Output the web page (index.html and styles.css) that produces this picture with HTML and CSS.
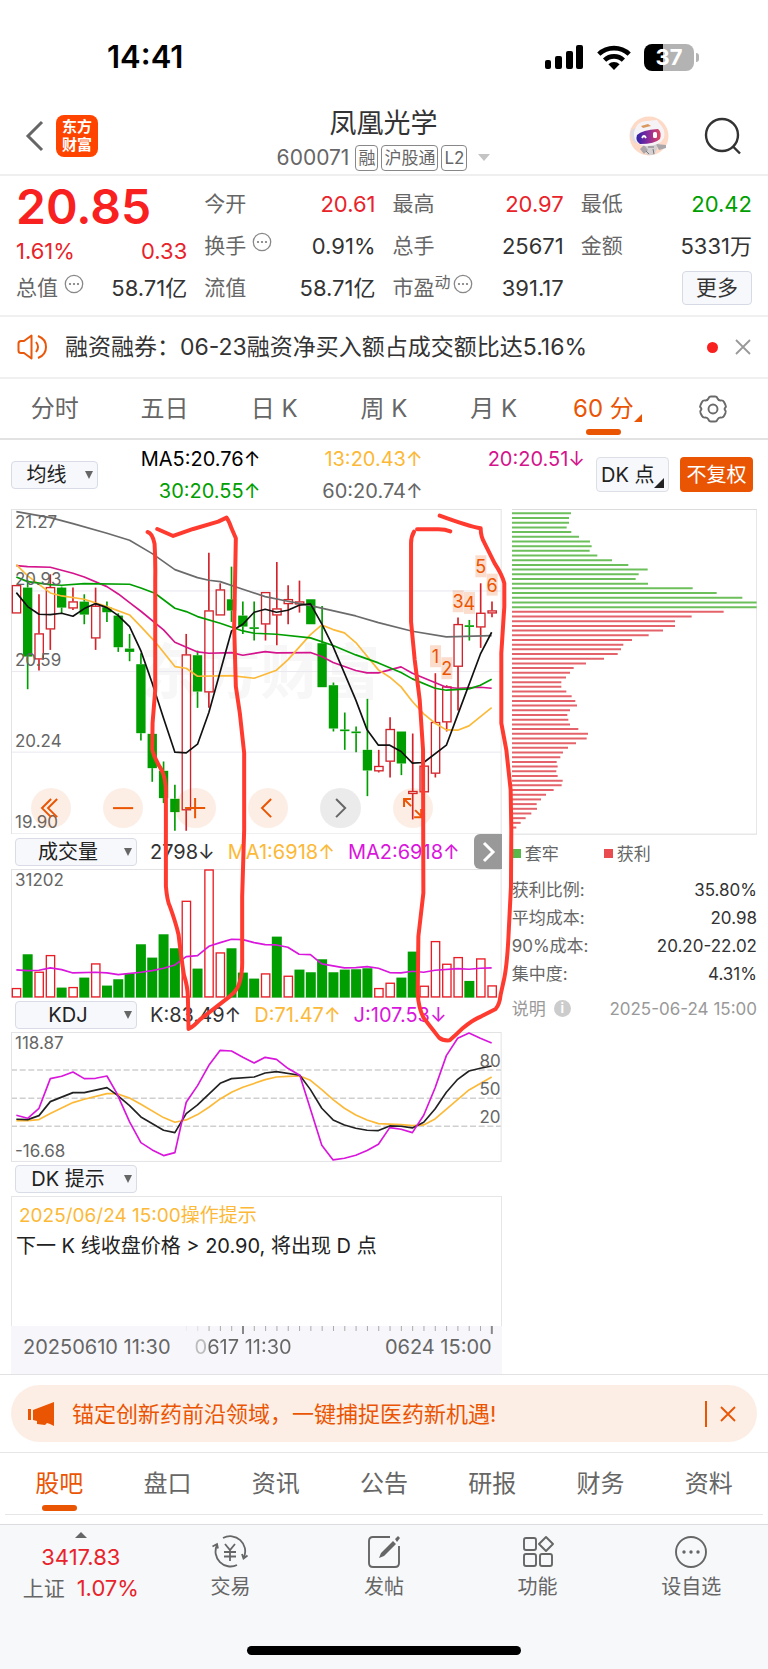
FILE: index.html
```
<!DOCTYPE html>
<html lang="zh-CN">
<head>
<meta charset="utf-8">
<meta name="viewport" content="width=device-width, initial-scale=1">
<title>凤凰光学 600071</title>
<link rel="stylesheet" href="styles.css">
</head>
<body>
<div class="status">
  <span class="clock">14:41</span>
  <div class="status-icons">
    <svg width="39" height="25" viewBox="0 0 39 25"><rect x="0" y="15" width="6" height="9" rx="2"/><rect x="10" y="11" width="7" height="13" rx="2"/><rect x="21" y="6" width="7" height="18" rx="2"/><rect x="31" y="0" width="7" height="24" rx="2"/></svg>
    <svg width="34" height="25" viewBox="0 0 34 25"><g fill="none" stroke="#000" stroke-width="4.6"><path d="M1.8 9.200A22 22 0 0 1 32.200 9.200"/><path d="M7.600 15.200A13.500 13.500 0 0 1 26.400 15.200"/></g><path d="M17 25l-5.600-5.800a8 8 0 0 1 11.200 0z"/></svg>
    <div class="battery"><span class="battery-body">37</span><i class="battery-cap"></i></div>
  </div>
</div>

<header class="header">
  <div class="header-left">
    <button class="icon-btn" aria-label="返回"><svg width="20" height="32" viewBox="0 0 20 32"><path d="M17 2L3 16l14 14" fill="none" stroke="#666" stroke-width="3"/></svg></button>
    <div class="logo"><span>东方</span><span>财富</span></div>
  </div>
  <div class="header-title">
    <h1>凤凰光学</h1>
    <div class="code-row"><span class="code">600071</span><span class="tag">融</span><span class="tag">沪股通</span><span class="tag">L2</span><i class="caret-light"></i></div>
  </div>
  <div class="header-right">
    <button class="icon-btn" aria-label="智能助手">
      <svg width="40" height="40" viewBox="0 0 40 40">
        <defs><linearGradient id="visor" x1="0" x2="1"><stop offset="0" stop-color="#2b22a8"/><stop offset=".5" stop-color="#8a2c9c"/><stop offset="1" stop-color="#e0455c"/></linearGradient></defs>
        <circle cx="20" cy="20" r="19.500" fill="#fdd9c6"/>
        <path d="M13 27h17l-2 6-3 6h-7l-3-6z" fill="#d5d1d3"/><path d="M27 28l10 1v3l-7 2zM15 29l-4 4 4 5 4-4z" fill="#aaa6aa"/>
        <path d="M19 31h6M17 35l3 3m4-5l1 5" stroke="#777" fill="none"/>
        <path d="M2 14l5-2 6 14-7 1q-6-5-4-13z" fill="#dedbe2"/>
        <path d="M5 16Q8 4 19 5q7-1 9-1l2 3q7 6 5 15-4 8-18 8Q4 29 5 16z" fill="#f6f3f6"/>
        <path d="M12 10l7-2 3 2-8 2z" fill="#d9985c"/>
        <path d="M8 19q5-5 21-6 4 3 2 10-5 5-20 5-5-3-3-9z" fill="url(#visor)"/>
        <path d="M13 22q2-4 4 0" fill="none" stroke="#fff" stroke-width="1.800"/><rect x="24" y="16" width="4" height="6" rx="1.500" fill="#fff"/>
      </svg>
    </button>
    <button class="icon-btn" aria-label="搜索"><svg width="38" height="38" viewBox="0 0 38 38"><g fill="none" stroke="#333" stroke-width="2.400"><circle cx="18" cy="18" r="16"/><path d="M29 29.500l7 7"/></g></svg></button>
  </div>
</header>

<section class="quote">
  <div class="quote-main">
    <div class="price">20.85</div>
    <div class="change red"><span>1.61%</span><span>0.33</span></div>
    <div class="item"><span class="name">总值<svg class="dots"><use href="#dots"/></svg></span><span>58.71亿</span></div>
  </div>
  <div class="quote-col">
    <div class="item"><span class="name">今开</span><span class="red">20.61</span></div>
    <div class="item"><span class="name">换手<svg class="dots"><use href="#dots"/></svg></span><span>0.91%</span></div>
    <div class="item"><span class="name">流值</span><span>58.71亿</span></div>
  </div>
  <div class="quote-col">
    <div class="item"><span class="name">最高</span><span class="red">20.97</span></div>
    <div class="item"><span class="name">总手</span><span>25671</span></div>
    <div class="item"><span class="name">市盈<small>动</small><svg class="dots tight"><use href="#dots"/></svg></span><span>391.17</span></div>
  </div>
  <div class="quote-col">
    <div class="item"><span class="name">最低</span><span class="green">20.42</span></div>
    <div class="item"><span class="name">金额</span><span>5331万</span></div>
    <div class="item end"><button class="more">更多</button></div>
  </div>
</section>
<svg class="defs"><symbol id="dots" viewBox="0 0 20 20"><circle cx="10" cy="10" r="8.700" fill="none" stroke="#888" stroke-width="1.300"/><g fill="#777"><circle cx="6" cy="10" r="1.100"/><circle cx="10" cy="10" r="1.100"/><circle cx="14" cy="10" r="1.100"/></g></symbol></svg>

<div class="notice">
  <svg width="32" height="26" viewBox="0 0 32 26"><g fill="none" stroke="#e9570a" stroke-width="2"><path d="M14.500 1.500v23L7 19H4q-2.500 0-2.500-2.500v-7Q1.500 7 4 7h3z" stroke-linejoin="round"/><path d="M19 8q4 5 0 10M21 2q8 3 8 11t-8 11"/></g></svg>
  <span class="notice-text">融资融券：06-23融资净买入额占成交额比达5.16%</span>
  <i class="dot"></i>
  <button class="icon-btn" aria-label="关闭提示"><svg width="16" height="16" viewBox="0 0 16 16"><path d="M1 1l14 14M15 1L1 15" stroke="#999" stroke-width="1.800"/></svg></button>
</div>

<nav class="tabs period">
  <button>分时</button><button>五日</button><button>日 K</button><button>周 K</button><button>月 K</button><button class="active has-menu">60 分</button>
  <button aria-label="图表设置"><svg width="30" height="28" viewBox="0 0 30 28"><g fill="none" stroke="#6a6a6a" stroke-width="1.900" stroke-linejoin="round"><path d="M10.500 3.500Q11 1.500 13 1.500h4q2 0 2.500 2 1 2 3 2 2.500-.5 3.500 1.500l1.500 3q1 1.500-.5 3-1 1 0 2 1.500 1.500.5 3l-1.500 3q-1 2-3.500 1.500-2 0-3 2-.5 2-2.500 2h-4q-2 0-2.500-2-1-2-3-2-2.500.5-3.500-1.500l-1.500-3q-1-1.500.5-3 1-1 0-2-1.500-1.500-.5-3L4 7q1-2 3.500-1.500 2 0 3-2z"/><circle cx="15" cy="14" r="4.500"/></g></svg></button>
</nav>

<div class="ma-row">
  <span class="pick small"><select aria-label="主图指标"><option>均线</option></select></span>
  <div class="ma-legend">
    <span class="c-black">MA5:20.76↑</span><span class="c-orange">13:20.43↑</span><span class="c-magenta">20:20.51↓</span>
    <span class="green">30:20.55↑</span><span class="c-gray">60:20.74↑</span>
  </div>
  <button class="dk-btn">DK 点</button>
  <button class="fq-btn">不复权</button>
</div>

<main class="board">
  <div class="charts">
    <div class="plot">
      <svg id="candles" viewBox="33 207 1473 977"></svg>
      <div class="watermark">东方财富</div>
      <div class="price-axis"><div><span>21.27</span><span>20.93</span></div><div><span>20.59</span></div><div><span>20.24</span></div><div><span>19.90</span></div></div>
      <div class="chart-tools">
        <button aria-label="最早"><svg viewBox="0 0 40 40"><path d="M20 11l-9 9 9 9M26 11l-9 9 9 9"/></svg></button>
        <button aria-label="缩小"><svg viewBox="0 0 40 40"><path d="M10 20h20"/></svg></button>
        <button aria-label="放大"><svg viewBox="0 0 40 40"><path d="M10 20h20M20 10v20"/></svg></button>
        <button aria-label="向左"><svg viewBox="0 0 40 40"><path d="M23 11l-9 9 9 9"/></svg></button>
        <button class="off" aria-label="向右"><svg viewBox="0 0 40 40"><path d="M16 11l9 9-9 9"/></svg></button>
        <button aria-label="全屏"><svg viewBox="0 0 40 40"><path d="M18 18l-7-7m0 8v-8h7M22 22l6 6m0-7v8h-7"/></svg></button>
      </div>
    </div>

    <div class="sub-head">
      <span class="pick"><select aria-label="副图一指标"><option>成交量</option></select></span>
      <span class="c-dark">2798↓</span><span class="c-orange">MA1:6918↑</span><span class="c-violet">MA2:6918↑</span>
      <button class="next" aria-label="下一组"><svg width="28" height="35" viewBox="0 0 28 35"><path d="M10 9l9 9-9 9" fill="none" stroke="#fff" stroke-width="3"/></svg></button>
    </div>
    <div class="plot">
      <svg id="volume" viewBox="33 117 1473 387"></svg>
      <span class="corner at-top">31202</span>
    </div>

    <div class="sub-head low">
      <span class="pick"><select aria-label="副图二指标"><option>KDJ</option></select></span>
      <span class="c-dark">K:83.49↑</span><span class="c-orange">D:71.47↑</span><span class="c-violet">J:107.53↓</span>
    </div>
    <div class="plot">
      <svg id="kdj" viewBox="33 607 1473 390"></svg>
      <span class="corner at-top">118.87</span><span class="corner at-bottom">-16.68</span>
      <div class="levels"><span>80</span><span>50</span><span>20</span></div>
    </div>

    <div class="sub-head low">
      <span class="pick"><select aria-label="副图三指标"><option>DK 提示</option></select></span>
    </div>
    <div class="tip">
      <p class="tip-time">2025/06/24 15:00操作提示</p>
      <p>下一 K 线收盘价格 &gt; 20.90, 将出现 D 点</p>
    </div>
    <div class="time-axis">
      <svg id="ticks" viewBox="0 0 491 9"></svg>
      <div class="times"><span>20250610 11:30</span><span class="fade">0617 11:30</span><span>0624 15:00</span></div>
    </div>

    <svg class="marks" viewBox="33 207 1473 1630">
      <g fill="none" stroke="#ff3b30" stroke-width="12" stroke-linecap="round" stroke-linejoin="round">
        <path d="M443 276Q458 280 464 312Q467 360 466 420L466 750L458 850L457 930Q463 955 482 985Q498 1010 498 1060L498 1340Q502 1385 510 1400Q528 1450 536 1485Q545 1560 552 1605Q563 1640 564 1670L566 1768Q580 1762 600 1740L690 1670Q715 1650 720 1625Q728 1600 727 1560L727 1370L733 1170L733 940L720 820L708 740L703 560L708 295L695 265Q686 240 680 233L655 245L580 267L520 288L472 267"/>
        <path d="M1352 274Q1335 267 1310 268L1252 268"/>
        <path d="M1243 275Q1234 290 1234 310L1234 545L1245 660L1260 780L1270 930L1271 1360L1256 1490L1254 1660Q1256 1705 1272 1735L1318 1794Q1330 1804 1350 1802Q1370 1785 1390 1765Q1420 1740 1445 1730L1488 1708Q1500 1695 1503 1665L1514 1615Q1523 1570 1527 1480L1534 1340L1535 1170L1533 1050L1520 930L1505 850L1505 640L1514 500L1514 430Q1508 405 1485 370L1455 310Q1443 290 1443 265Q1410 260 1320 227"/>
      </g>
    </svg>
  </div>

  <aside class="chips">
    <svg id="profile" viewBox="36 207 736 977"></svg>
    <div class="chip-key"><span><i class="sq g"></i>套牢</span><span><i class="sq r"></i>获利</span></div>
    <dl class="stats">
      <dt>获利比例:</dt><dd>35.80%</dd>
      <dt>平均成本:</dt><dd>20.98</dd>
      <dt>90%成本:</dt><dd>20.20-22.02</dd>
      <dt>集中度:</dt><dd>4.31%</dd>
    </dl>
    <div class="chip-note"><span>说明</span><i class="info">i</i><time>2025-06-24 15:00</time></div>
  </aside>
</main>

<section class="promo-wrap">
  <div class="promo">
    <svg width="27" height="24" viewBox="0 0 27 24"><path d="M0 7h3v11H0zM5 8l21-8v24l-4-2-3-1-2 2-8-1v-3l-4-1z" fill="#ea5504"/></svg>
    <a href="#" class="promo-text">锚定创新药前沿领域，一键捕捉医药新机遇!</a>
    <i class="bar"></i>
    <button class="icon-btn" aria-label="关闭广告"><svg width="16" height="16" viewBox="0 0 16 16"><path d="M1 1l14 14M15 1L1 15" stroke="#ea5504" stroke-width="1.800"/></svg></button>
  </div>
</section>

<nav class="tabs info-tabs">
  <button class="active">股吧</button><button>盘口</button><button>资讯</button><button>公告</button><button>研报</button><button>财务</button><button>资料</button>
</nav>

<footer class="dock">
  <div class="dock-items">
    <div class="index"><i class="caret-up"></i><span class="red num">3417.83</span><span>上证<b class="red num">1.07%</b></span></div>
    <button><svg width="38" height="34" viewBox="0 0 38 34"><g fill="none" stroke="#666" stroke-width="1.800"><path d="M12 3A15 15 0 0 1 33 22M36.500 20.500l-4 3-1.500-4.500M26 30A15 15 0 0 1 6 10M1.500 11.500l4.500-2.500 1 4.500" /><path d="M14 9l5 6 5-6M19 15v11M13 17h12M13 21.500h12"/></g></svg>交易</button>
    <button><svg width="34" height="34" viewBox="0 0 34 34"><g fill="none" stroke="#666" stroke-width="1.900"><path d="M23 2H6Q2 2 2 6v22q0 4 4 4h22q4 0 4-4V11"/></g><path d="M12 23l2-5L26 6l3 3-12 12zM28 4l3-3 2 2-3 4z" fill="#666"/></svg>发帖</button>
    <button><svg width="32" height="34" viewBox="0 0 32 34"><g fill="none" stroke="#666" stroke-width="1.900"><rect x="2" y="3" width="12" height="12" rx="2"/><rect x="2" y="19" width="12" height="12" rx="2"/><rect x="18" y="19" width="12" height="12" rx="2"/><path d="M24 2l7 7-7 7-7-7z" stroke-linejoin="round"/></g></svg>功能</button>
    <button><svg width="34" height="34" viewBox="0 0 34 34"><circle cx="17" cy="17" r="15" fill="none" stroke="#666" stroke-width="1.900"/><g fill="#666"><circle cx="10" cy="17" r="1.700"/><circle cx="17" cy="17" r="1.700"/><circle cx="24" cy="17" r="1.700"/></g></svg>设自选</button>
  </div>
  <div class="home-bar"></div>
</footer>
<script src="charts.js"></script>
</body>
</html>
```
FILE: styles.css
```
* { box-sizing: border-box; }
body {
  margin: 0;
  background: #fff;
  color: #333;
  font-family: Inter, "Noto Sans CJK SC", sans-serif;
  font-size: 20px;
  line-height: 24px;
}
button, select { font: inherit; color: inherit; }
button { border: 0; background: none; padding: 0; cursor: pointer; }
svg { display: block; flex: none; }
p, h1, dl, dd { margin: 0; }
.defs { position: absolute; width: 0; height: 0; }
.num { font-size: 22px; }
.red { color: #e8232a; }
.green { color: #009e00; }
.c-black { color: #000; }
.c-dark { color: #333; }
.c-gray { color: #666; }
.c-orange { color: #fcb937; }
.c-magenta { color: #d4148c; }
.c-violet { color: #d916dc; }
.icon-btn { display: flex; align-items: center; }

.status { height: 98px; padding: 16px 69px 0 107px; display: flex; justify-content: space-between; align-items: center; }
.clock { font-size: 31px; font-weight: 600; color: #000; }
.status-icons { display: flex; align-items: center; gap: 13px; }
.battery { display: flex; align-items: center; gap: 2px; }
.battery-body {
  width: 50px; height: 27px; border-radius: 8px;
  background: linear-gradient(90deg, #000 37%, #b3b3b3 37%);
  color: #fff; font-size: 22px; font-weight: 700; line-height: 27px; text-align: center;
}
.battery-cap { width: 3px; height: 9px; border-radius: 0 3px 3px 0; background: #b3b3b3; }

.header { height: 78px; padding: 0 26px 0 25px; display: grid; grid-template-columns: 1fr auto 1fr; align-items: center; border-bottom: 2px solid #efefef; }
.header-left, .header-right { display: flex; align-items: center; }
.header-left { gap: 11px; }
.header-right { justify-content: flex-end; gap: 35px; }
.logo {
  width: 42px; height: 42px; border-radius: 8px; background: #ff4400; color: #fff;
  display: flex; flex-direction: column; align-items: center; justify-content: center;
  font-size: 15px; font-weight: 700; line-height: 18px;
}
h1 { font-size: 27px; font-weight: 400; line-height: 36px; text-align: center; }
.header-title { padding-top: 4px; }
.code-row { display: flex; align-items: center; gap: 3px; color: #666; font-size: 21px; margin-top: 3px; }
.code { margin-right: 3px; }
.tag { border: 1px solid #888; border-radius: 4px; padding: 0 2px; font-size: 17px; }
.caret-light { margin-left: 8px; border: 6px solid transparent; border-top: 7px solid #c4c4c4; border-bottom: 0; }

.quote { padding: 7px 16px 6px; display: grid; grid-template-columns: repeat(4, 1fr); column-gap: 17px; border-bottom: 2px solid #f0f0f0; font-size: 22px; }
.item { height: 42px; display: flex; align-items: center; justify-content: space-between; }
.end { justify-content: flex-end; }
.name { display: flex; align-items: center; color: #666; font-size: 21px; }
.name small { font-size: 16px; align-self: flex-start; line-height: 16px; }
.dots { width: 20px; height: 20px; margin: 0 0 8px 6px; }
.dots.tight { margin-left: 2px; }
.price { height: 56px; color: #f9211f; font-size: 48px; font-weight: 600; line-height: 48px; }
.change { height: 28px; display: flex; align-items: flex-start; justify-content: space-between; }
.more { width: 70px; height: 34px; border: 1px solid #d6dae4; border-radius: 4px; background: #f7f8fb; font-size: 21px; }

.notice { height: 62px; padding: 0 17px; display: flex; align-items: center; border-bottom: 2px solid #f0f0f0; }
.notice-text { flex: 1; margin-left: 16px; font-size: 23px; }
.dot { width: 11px; height: 11px; border-radius: 50%; background: #f9211f; margin-right: 17px; }

.tabs { display: flex; color: #666; font-size: 24px; }
.tabs button { flex: 1 1 0; position: relative; display: flex; align-items: center; justify-content: center; white-space: pre; }
.tabs .active { color: #ea5504; }
.tabs .active::after { content: ""; position: absolute; bottom: 3px; left: 50%; width: 35px; height: 6px; margin-left: -17px; border-radius: 3px; background: #ea5504; }
.has-menu::before { content: ""; position: absolute; right: 16px; bottom: 16px; border: 4px solid #ea5504; border-top-color: transparent; border-left-color: transparent; }
.period { height: 61px; border-bottom: 2px solid #e2e2e2; }

.ma-row { height: 69px; padding: 0 15px 0 11px; display: flex; align-items: center; }
.pick { position: relative; display: block; width: 122px; height: 28px; flex: none; }
.pick select {
  appearance: none; width: 100%; height: 100%; padding: 0 16px 0 0; border: 1px solid #d9dce6; border-radius: 4px;
  background: #f7f8fb; color: #222; text-align: center; text-align-last: center; line-height: 24px;
}
.pick::after { content: ""; position: absolute; right: 5px; top: 10px; border: 4px solid transparent; border-top: 8px solid #666; border-bottom: 0; }
.pick.small { width: 87px; }
.ma-legend { flex: 1; display: grid; grid-template-columns: repeat(3, 1fr); row-gap: 8px; text-align: right; margin-right: 11px; }
.dk-btn, .fq-btn { height: 35px; border-radius: 4px; width: 73px; flex: none; }
.dk-btn { position: relative; border: 1px solid #dcdfe6; background: #f7f8fb; text-align: left; padding-left: 4px; color: #222; }
.dk-btn::after { content: ""; position: absolute; right: 4px; bottom: 3px; border: 5px solid #222; border-top-color: transparent; border-left-color: transparent; }
.fq-btn { margin-left: 11px; background: #ea5504; color: #fff; }

.board { padding: 0 11px; display: grid; grid-template-columns: minmax(0, 2fr) minmax(0, 1fr); column-gap: 10px; align-items: start; }
.charts { position: relative; }
.charts > .plot > svg, .chips > svg, .time-axis > svg { width: 100%; height: auto; }
.plot { position: relative; color: #666; font-size: 17px; }
#candles, #volume, #kdj { position: relative; z-index: 1; }
.watermark { position: absolute; left: 0; right: 0; top: 41%; padding-left: 8px; text-align: center; font-size: 60px; font-weight: 700; line-height: 1; color: #f7f7f7; }
.price-axis { position: absolute; inset: 0; z-index: 2; padding: 1px 0 0 4px; display: grid; grid-template-rows: repeat(4, 1fr); }
.price-axis div { display: flex; flex-direction: column; justify-content: flex-end; }
.price-axis div:first-child { justify-content: space-between; }
.chart-tools { position: absolute; z-index: 2; left: 4%; bottom: 2%; width: 82%; display: flex; justify-content: space-between; }
.chart-tools button { width: 10%; border-radius: 50%; background: rgba(234, 85, 4, .1); }
.chart-tools svg { width: 100%; height: auto; fill: none; stroke: #ea5504; stroke-width: 2; }
.chart-tools .off { background: rgba(0, 0, 0, .08); }
.chart-tools .off svg { stroke: #666; }
.sub-head { height: 35px; padding-left: 4px; display: flex; align-items: center; gap: 13px; white-space: nowrap; }
.sub-head.low { height: 34px; }
.next { margin-left: auto; border-radius: 6px 0 0 6px; background: #999; }
.corner { position: absolute; left: 4px; z-index: 2; line-height: 22px; }
.at-top { top: 0; }
.at-bottom { bottom: 0; }
.levels { position: absolute; right: 1px; top: 11%; z-index: 2; display: flex; flex-direction: column; line-height: 28px; }
.tip { height: 130px; padding: 4px; border: 1px solid #e6e6e8; border-bottom: 0; color: #222; line-height: 30px; }
.tip-time { color: #fcb937; font-size: 19px; padding-left: 3px; }
.time-axis { background: #f7f7fb; color: #666; font-size: 20px; }
.times { display: flex; padding: 0 10px 15px 12px; white-space: nowrap; }
.times span { margin-right: 24px; }
.times .fade { background: linear-gradient(90deg, #bbb 10px, #666 14px); background-clip: text; color: transparent; }
.times span:last-child { margin: 0 0 0 auto; }
.marks { position: absolute; left: 0; top: 0; z-index: 3; width: 100%; height: auto; overflow: visible; pointer-events: none; }

.chips { color: #666; font-size: 17px; }
.chip-key { display: flex; margin: 6px 0 9px; line-height: 26px; }
.chip-key span { width: 92px; display: flex; align-items: center; gap: 4px; }
.sq { width: 9px; height: 9px; }
.sq.g { background: #5ab84a; }
.sq.r { background: #e94b4f; }
.stats { display: grid; grid-template-columns: auto 1fr; line-height: 28px; }
.stats dd { text-align: right; color: #333; }
.chip-note { display: flex; align-items: center; margin-top: 9px; color: #999; }
.info { width: 17px; height: 17px; margin-left: 8px; border-radius: 50%; background: #ccc; color: #fff; font-size: 13px; font-style: normal; font-weight: 700; line-height: 17px; text-align: center; }
.chip-note time { margin-left: auto; }

.promo-wrap { padding: 10px 11px; border-top: 1px solid #e2e2e4; border-bottom: 1px solid #e6e6e6; }
.promo { height: 57px; padding: 0 21px 0 17px; border-radius: 29px; background: #fdeee5; color: #ea5504; display: flex; align-items: center; }
.promo-text { flex: 1; margin-left: 17px; font-size: 22px; color: inherit; text-decoration: none; }
.bar { width: 2px; height: 26px; margin-right: 13px; background: #ea5504; }

.info-tabs { height: 62px; margin: 0 5px; border-bottom: 1px solid #e6e6e6; }
.dock { margin-top: 9px; height: 145px; border-top: 1px solid #dcdce0; background: #f7f8fa; color: #666; display: flex; flex-direction: column; justify-content: space-between; align-items: center; }
.dock-items { width: 100%; display: grid; grid-template-columns: repeat(5, 1fr); }
.dock-items button { display: flex; flex-direction: column; align-items: center; gap: 6px; padding-top: 10px; }
.index { display: flex; flex-direction: column; align-items: center; gap: 7px; padding: 7px 0 0 8px; font-size: 21px; white-space: nowrap; }
.index b { font-weight: 400; margin-left: 12px; }
.caret-up { border: 6px solid transparent; border-bottom: 6px solid #666; border-top: 0; }
.home-bar { width: 274px; height: 9px; border-radius: 5px; margin-bottom: 14px; background: #000; }
```
FILE: charts.js
```
// Chart geometry is in chart units: one bar every 34 units, first bar centred on x = 49.
const NS = "http://www.w3.org/2000/svg";
const GREEN = "#009e00";
const RED = "#d3222a";
const FIRST = 49;
const STEP = 34;
const barX = (i) => FIRST + STEP * i;

function add(svg, tag, attrs, text) {
  const el = document.createElementNS(NS, tag);
  for (const key in attrs) el.setAttribute(key, attrs[key]);
  if (text) el.textContent = text;
  svg.appendChild(el);
}
function rule(svg, x1, y1, x2, y2, stroke, width, dash) {
  add(svg, "line", { x1, y1, x2, y2, stroke, "stroke-width": width, "stroke-dasharray": dash || "none" });
}
function curve(svg, points, stroke) {
  add(svg, "polyline", { points, fill: "none", stroke, "stroke-width": 5, "stroke-linejoin": "round" });
}
function frame(svg, x, y, width, height) {
  add(svg, "rect", { x, y, width, height, fill: "none", stroke: "#e3e3e6", "stroke-width": 3 });
}

// Candles: colour, body top, body bottom, high, low
const candles = [
  ["r",436,520,436,520],["g",443,650,420,748],["r",581,658,463,692],["r",442,568,403,630],["g",443,503,440,520],
  ["r",485,505,443,510],["g",485,524,463,553],["r",498,595,443,630],["g",502,517,485,546],["g",527,622,520,636],
  ["g",626,636,582,664],["g",673,880,640,902],["g",882,985,882,1026],["g",993,1075,965,1090],["g",1077,1117,1035,1173],
  ["r",644,1111,582,1173],["g",646,755,632,804],["r",512,757,338,804],["r",449,526,430,526],["g",478,512,380,546],
  ["g",527,560,485,582],["g",562,567,485,602],["r",457,553,457,602],["r",506,526,366,616],["r",478,492,436,553],
  ["r",485,493,422,518],["g",478,553,478,553],["g",610,742,498,742],["g",736,866,728,875],["g",869,874,818,930],
  ["g",875,880,860,937],["g",930,992,777,1069],["r",979,994,930,998],["r",868,965,832,1013],["g",875,971,875,1006],
  ["r",1054,1062,881,1139],["r",978,1057,978,1057],["r",847,1001,700,1013],["r",740,847,736,875],["r",553,680,533,812],
  ["g",556,561,540,602],["r",519,562,430,624],["r",512,520,485,532]
];
const main = document.getElementById("candles");
[453, 695, 937].forEach((y) => rule(main, 33, y, 1504, y, "#e8e8ef", 3));
frame(main, 34.5, 208.5, 1470, 974);
candles.forEach(([c, top, bottom, high, low], i) => {
  const x = barX(i);
  const color = c === "g" ? GREEN : RED;
  rule(main, x, high, x, top, color, 5);
  rule(main, x, bottom, x, low, color, 5);
  if (c === "g") add(main, "rect", { x: x - 14, y: top, width: 28, height: bottom - top, fill: color });
  else add(main, "rect", { x: x - 12, y: top + 1, width: 25, height: Math.max(bottom - top - 2, 3), fill: "none", stroke: color, "stroke-width": 4 });
});
curve(main, "49,215 151,233 219,251 321,280 389,301 457,341 525,389 593,413 627,421 661,425 729,448 796,470 864,484 932,497 1068,528 1136,548 1238,574 1340,591 1476,587", "#6b6b6b");
curve(main, "49,377 83,380 151,382 219,400 253,411 321,440 355,462 389,488 423,514 491,570 525,607 593,636 627,640 695,638 729,646 796,635 830,639 932,638 966,650 1000,668 1068,692 1102,699 1136,699 1204,681 1238,700 1340,742 1374,745 1442,742 1476,745", "#d4148c");
curve(main, "49,374 83,408 151,459 185,468 253,478 321,500 389,525 423,560 465,605 525,680 559,685 593,709 695,707 763,715 830,691 864,660 932,584 966,555 1000,569 1034,579 1068,608 1136,690 1170,712 1204,741 1238,785 1272,822 1306,850 1340,870 1374,871 1408,858 1476,803", "#fcb937");
curve(main, "49,411 83,425 151,434 185,436 253,431 389,433 423,444 465,460 525,505 559,515 593,530 661,550 729,573 763,580 830,583 932,594 1000,617 1068,645 1136,669 1204,698 1238,717 1306,745 1340,751 1408,747 1442,736 1476,718", GREEN);
curve(main, "49,458 83,500 117,523 151,524 185,520 219,529 253,506 287,491 321,503 355,527 389,560 423,633 457,730 491,835 525,937 559,939 593,913 627,818 695,573 729,553 763,517 796,508 830,517 864,511 898,496 932,492 966,552 1000,620 1068,780 1102,870 1136,916 1170,916 1204,935 1238,970 1272,968 1340,916 1374,825 1442,643 1476,577", "#111");
[[37,650],[38,686],[39,485],[40,490],[41,380],[42,435]].forEach(([i, y], n) => {
  add(main, "rect", { x: barX(i) - 16, y: y - 34, width: 33, height: 66, fill: "#ea5504", "fill-opacity": 0.2 });
  add(main, "text", { x: barX(i), y: y + 20, fill: "#ea5504", "font-size": 54, "text-anchor": "middle" }, String(n + 1));
});

// Volume bars: top of each bar, and the indexes of the falling ones
const volumeTops = [475,373,426,376,473,472,443,401,467,448,430,343,383,313,355,213,416,119,368,355,428,446,431,320,438,419,427,388,427,419,418,415,475,459,443,365,468,334,402,382,453,386,467];
const volumeGreen = [1,4,6,8,9,10,11,12,13,14,16,19,20,21,23,25,26,27,28,29,30,31,34,35,40];
const volume = document.getElementById("volume");
frame(volume, 34.5, 118.5, 1470, 384);
volumeTops.forEach((top, i) => {
  if (volumeGreen.includes(i)) add(volume, "rect", { x: barX(i) - 15, y: top, width: 30, height: 503 - top, fill: GREEN });
  else add(volume, "rect", { x: barX(i) - 12, y: top + 1, width: 25, height: 500 - top, fill: "#fff", stroke: "#ea1c24", "stroke-width": 4 });
});
curve(volume, "49,420 83,422 117,421 151,414 185,419 219,429 287,427 321,429 355,434 423,427 457,422 491,415 525,405 559,380 593,377 627,349 661,338 695,328 729,329 763,338 796,344 830,345 864,352 898,373 932,374 966,402 1034,414 1068,413 1102,410 1136,415 1170,428 1204,429 1238,424 1272,427 1306,421 1374,416 1408,418 1442,415 1476,414", "#d916dc");

const kdj = document.getElementById("kdj");
[721, 806, 890].forEach((y) => rule(kdj, 33, y, 1504, y, "#cfcfcf", 4, "18 8"));
frame(kdj, 34.5, 608.5, 1470, 387);
curve(kdj, "49,873 83,873 117,870 151,852 219,819 253,809 321,792 350,792 389,805 423,824 491,864 525,878 559,871 593,855 627,833 661,808 695,788 729,773 796,750 830,742 864,740 900,739 932,752 966,780 1000,810 1034,836 1068,856 1102,871 1136,882 1204,885 1238,888 1272,886 1306,868 1408,781 1476,742", "#fcb937");
curve(kdj, "49,869 83,870 117,858 151,816 219,789 253,789 321,774 350,795 389,828 423,862 491,902 525,909 559,852 593,826 661,761 695,747 763,742 796,730 830,726 900,737 932,780 966,836 1000,871 1034,886 1068,896 1102,902 1136,903 1170,889 1204,890 1238,895 1272,878 1306,838 1340,788 1374,749 1408,724 1442,716 1476,709", "#222");
curve(kdj, "49,857 83,866 117,836 151,747 185,740 219,727 253,747 287,746 321,739 350,790 389,877 423,939 457,961 491,978 525,969 559,818 593,768 627,707 661,662 695,664 729,683 763,700 796,683 830,689 864,716 900,737 966,947 1000,991 1034,986 1068,977 1102,963 1136,944 1170,894 1204,899 1238,909 1272,857 1306,775 1340,678 1374,626 1408,610 1442,626 1476,640", "#d916dc");

// Cost distribution: right end of each price level; the first 21 are above the current price
const levels = [213,207,207,200,214,237,270,275,269,292,336,385,443,416,407,444,578,650,727,770,770,671,575,525,525,489,446,396,370,363,353,312,258,221,210,198,184,184,199,215,226,231,210,202,205,210,235,264,260,228,204,189,181,170,173,169,173,188,185,161,138,123,110,111,94,77,62,49];
const profile = document.getElementById("profile");
add(profile, "path", { d: "M36 208.500H770.500V1182.500H36", fill: "none", stroke: "#dcdcdf", "stroke-width": 3 });
levels.forEach((end, i) => {
  const y = 220 + i * 14.07;
  rule(profile, 36, y, end, y, i < 21 ? "#6cbf5b" : "#e4636a", 6);
});

const ticks = document.getElementById("ticks");
for (let i = 0; i < 28; i++) {
  const x = 175.5 + i * 11.33;
  const big = i === 5 || i === 27;
  const shade = i === 0 ? "#ececef" : i === 1 ? "#ddd" : "#aaa";
  rule(ticks, x, 0, x, big ? 8 : 5, big ? "#888" : shade, big ? 2 : 1);
}
```
